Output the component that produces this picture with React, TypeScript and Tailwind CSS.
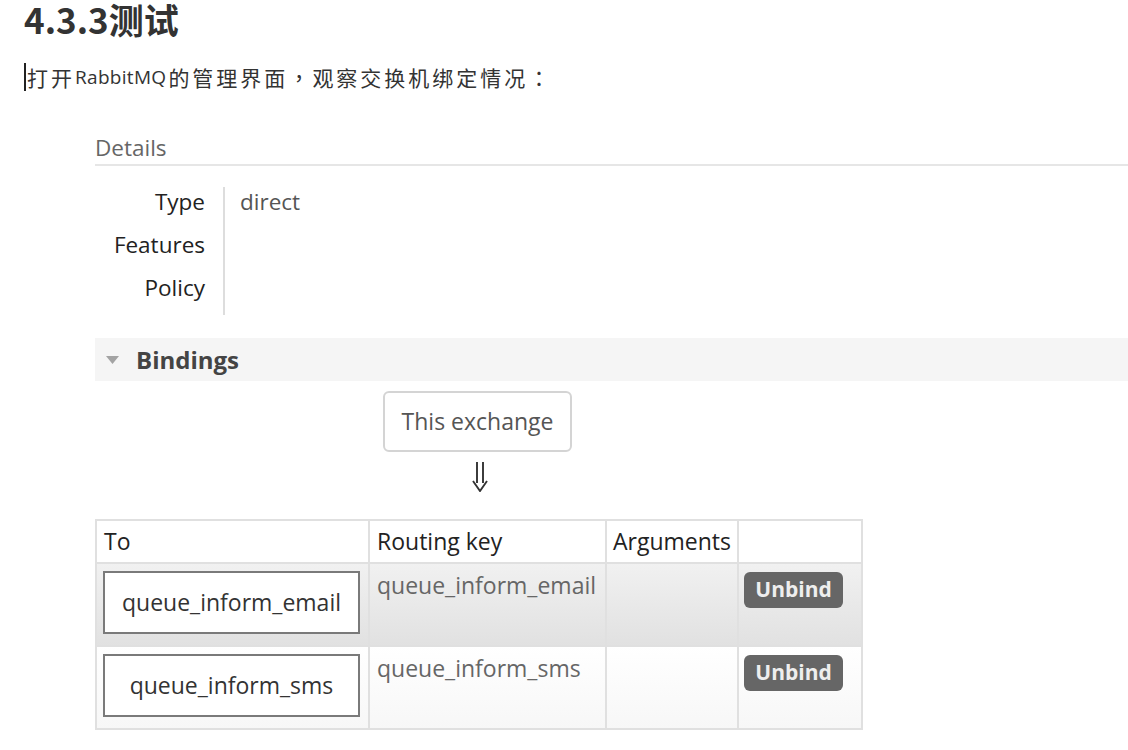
const details = [
  { label: "Type", value: "direct" },
  { label: "Features", value: "" },
  { label: "Policy", value: "" },
];

const bindings = [
  { queue: "queue_inform_email", key: "queue_inform_email", alt: true },
  { queue: "queue_inform_sms", key: "queue_inform_sms", alt: false },
];

const App = () => {
  return (
    <div className="w-[1128px] h-[750px] overflow-hidden bg-white text-[#333]">
      <h1 className="pl-[24px] h-[38px] text-[35px] leading-[38px] font-bold font-['Noto_Sans_CJK_SC',sans-serif] text-[#333]">
        4.3.3测试
      </h1>

      <p className="mt-[25px] ml-[24px] pl-[1px] border-l-2 border-[#222] h-[28px] flex items-center text-[21px] leading-[28px] tracking-[3px] font-['Noto_Sans_CJK_SC',sans-serif] text-[#333]">
        打开
        <span className="font-['Open_Sans',sans-serif] text-[19px] tracking-[0.3px] mr-[2px]">RabbitMQ</span>
        的管理界面<span className="font-['Noto_Sans_CJK_TC',sans-serif]">，</span>观察交换机绑定情况
        <span className="font-['Noto_Sans_CJK_TC',sans-serif]">：</span>
      </p>

      <div className="ml-[95px] mt-[40px] font-['Open_Sans',sans-serif]">
        <div className="h-[35px] border-b-2 border-[#e6e6e6] text-[22.5px] leading-[33px] text-[#666]">
          Details
        </div>

        <div className="mt-[14px] flex">
          <div className="w-[128px] pr-[18px] text-right">
            {details.map((d) => (
              <div key={d.label} className="h-[43px] flex items-center justify-end text-[22.5px] text-[#222]">
                {d.label}
              </div>
            ))}
          </div>
          <div className="self-start mt-[7px] h-[128px] border-l-2 border-[#ddd] pl-[15px]">
            <div className="-mt-[7px]">
              {details.map((d) => (
                <div key={d.label} className="h-[43px] flex items-center text-[22.5px] text-[#555]">
                  {d.value}
                </div>
              ))}
            </div>
          </div>
        </div>

        <div className="mt-[23px] h-[43px] bg-[#f5f5f5] flex items-center pl-[11px] gap-[17px]">
          <svg width="13" height="8" viewBox="0 0 13 8">
            <polygon points="0,0 13,0 6.5,8" fill="#a3a3a3" />
          </svg>
          <span className="text-[24px] font-bold text-[#444]">Bindings</span>
        </div>

        <div className="flex flex-col items-center w-[765px] mt-[10px]">
          <div className="h-[61px] w-[189px] border-2 border-[#d4d4d4] rounded-[6px] flex items-center justify-center text-[23px] text-[#555]">
            This exchange
          </div>
          <div className="h-[50px] pt-[10px] pl-[4px]">
            <svg width="18" height="30" viewBox="0 0 18 30" fill="none" stroke="#333" strokeWidth="1.9">
              <path d="M6 0 V21" />
              <path d="M12 0 V21" />
              <path d="M2 19 L9 29 L16 19" strokeLinejoin="miter" />
            </svg>
          </div>
        </div>

        <table className="mt-[17px] border-collapse border-2 border-[#e0e0e0] text-[23px]">
          <thead>
            <tr className="h-[43px]">
              <th className="w-[273px] border-2 border-[#e0e0e0] px-[7px] text-left font-normal text-[#222]">To</th>
              <th className="w-[237px] border-2 border-[#e0e0e0] px-[7px] text-left font-normal text-[#222]">Routing key</th>
              <th className="w-[128px] border-2 border-[#e0e0e0] px-[6px] text-left font-normal text-[#222]">Arguments</th>
              <th className="w-[124px] border-2 border-[#e0e0e0]"></th>
            </tr>
          </thead>
          <tbody>
            {bindings.map((b) => (
              <tr
                key={b.queue}
                className={
                  b.alt
                    ? "h-[83px] bg-gradient-to-b from-[#f1f1f1] to-[#e1e1e1]"
                    : "h-[83px] bg-gradient-to-b from-[#ffffff] to-[#f7f7f7]"
                }
              >
                <td className="border-2 border-[#e0e0e0] px-[6px] pt-[7px] align-top">
                  <div className="h-[63px] w-[257px] border-2 border-[#7a7a7a] bg-white flex items-center justify-center text-[#333]">
                    {b.queue}
                  </div>
                </td>
                <td className="border-2 border-[#e0e0e0] px-[7px] pt-[4px] align-top text-[#666]">{b.key}</td>
                <td className="border-2 border-[#e0e0e0]"></td>
                <td className="border-2 border-[#e0e0e0] px-[5px] pt-[7px] align-top">
                  <span className="inline-flex h-[36px] w-[99px] items-center justify-center rounded-[6px] bg-[#666] text-[21px] font-bold text-[#eee]">
                    Unbind
                  </span>
                </td>
              </tr>
            ))}
          </tbody>
        </table>
      </div>
    </div>
  );
};

export default App;
